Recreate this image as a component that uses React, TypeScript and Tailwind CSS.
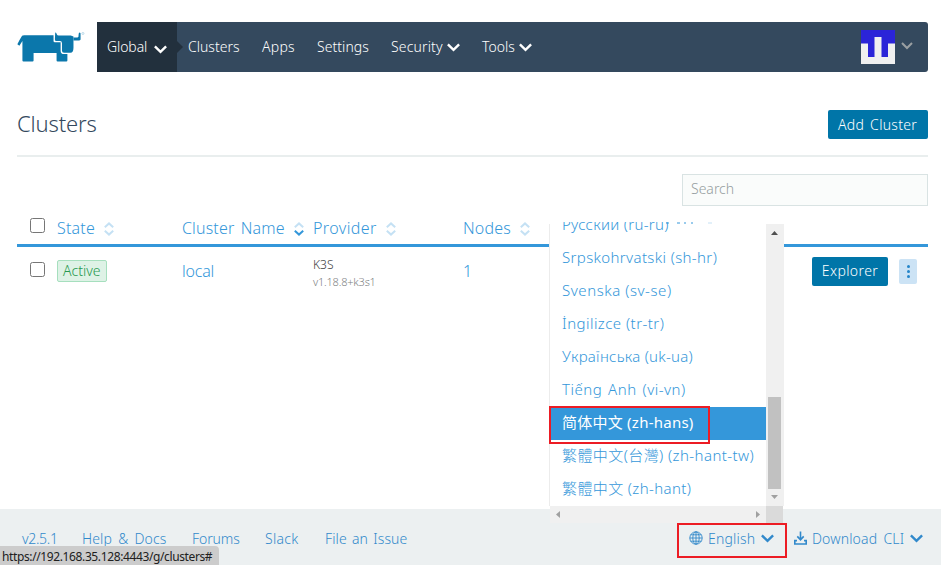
import type { ReactNode } from "react";

function Chevron({ className }: { className?: string }) {
  return (
    <svg viewBox="0 0 13 9" className={`h-[9px] w-[13px] shrink-0 ${className ?? ""}`} fill="none" stroke="currentColor" strokeWidth="2.4">
      <path d="M0.9 1.4 L6.5 6.9 L12.1 1.4" />
    </svg>
  );
}

function Sort({ active }: { active?: boolean }) {
  return (
    <svg viewBox="0 0 10 14" className="h-[14px] w-[10px] shrink-0" fill="none" strokeWidth="2">
      <path d="M0.8 5.2 L5 1.4 L9.2 5.2" stroke="#c5e1f4" />
      <path d="M0.8 8.8 L5 12.6 L9.2 8.8" stroke={active ? "#3497da" : "#c5e1f4"} />
    </svg>
  );
}

function Logo() {
  return (
    <svg viewBox="20 25 210 100" className="h-[34px] w-[71px]" fill="#0b77ab">
      <path d="M24 67 Q31 53 38 42 Q40 40 44 40 H131 V57 Q131 61 135 61 H152 V86 Q152 96 162 96 H172 V115 Q172 118 169 118 H143 Q140 118 140 115 V93 H72 V115 Q72 118 69 118 H42 Q39 118 39 115 V57 L30 71 Z" />
      <path d="M136 32 Q139 31 141 38 Q142 41 146 41 H182 Q186 42 190 44 V77 Q190 91 181 92 H162 Q156 92 156 86 V64 Q156 57 150 57 H138 Q135 57 135 52 Z" />
      <path d="M192 47 H202 Q206 46 205 40 Q205 32 208 32 Q212 31 211 40 V53 Q210 56 206 56 H190 V47Z" />
      <circle cx="218" cy="35" r="3" fill="none" stroke="#78b5d2" strokeWidth="1.4" />
    </svg>
  );
}

function Checkbox() {
  return <input type="checkbox" className="block size-[15px] appearance-none rounded-[2.5px] border border-[#767676] bg-white" />;
}

function Globe() {
  return (
    <svg viewBox="0 0 14 14" className="h-[14px] w-[14px]" fill="none" stroke="currentColor" strokeWidth="0.9">
      <circle cx="7" cy="7" r="6.2" />
      <ellipse cx="7" cy="7" rx="3.2" ry="6.2" />
      <path d="M7 0.8 V13.2 M0.8 7 H13.2 M1.6 3.8 H12.4 M1.6 10.2 H12.4" />
    </svg>
  );
}

function Download() {
  return (
    <svg viewBox="0 0 13 14" className="h-[14px] w-[13px]" fill="none" stroke="currentColor" strokeWidth="1.6">
      <path d="M6.5 0.5 V8.6 M3.3 5.4 L6.5 8.8 L9.7 5.4" />
      <path d="M3 9.6 H0.8 V13 H12.2 V9.6 H10" />
    </svg>
  );
}

function Head({ children, gap, active }: { children: ReactNode; gap: string; active?: boolean }) {
  return (
    <div className={`flex items-center ${gap}`}>
      {children}
      <div className="pt-[2px]"><Sort active={active} /></div>
    </div>
  );
}

const languages = [
  { name: "Русский (ru-ru)", track: "tracking-[0.3px]" },
  { name: "Srpskohrvatski (sh-hr)", track: "tracking-[0.36px]" },
  { name: "Svenska (sv-se)", track: "tracking-[0.55px]" },
  { name: "İngilizce (tr-tr)", track: "tracking-[0.46px]" },
  { name: "Українська (uk-ua)", track: "tracking-[0.27px]" },
  { name: "Tiếng Anh (vi-vn)", track: "tracking-[0.5px] [word-spacing:1.5px]" },
  { name: "简体中文 (zh-hans)", track: "tracking-[0.24px]", selected: true },
  { name: "繁體中文(台灣) (zh-hant-tw)", track: "tracking-[0.42px]" },
  { name: "繁體中文 (zh-hant)", track: "tracking-[0.38px]" },
];

function LanguageMenu() {
  return (
    <div className="absolute left-[549px] top-[222px] h-[301px] w-[235px]">
      <div className="flex h-[284px]">
        <div className="relative w-[217px] overflow-hidden bg-white">
          <ul className="-mt-[13px] text-[15px] leading-[30px] text-[#3497da]">
            {languages.map((l) => (
              <li key={l.name} className={`h-[33px] whitespace-nowrap pl-[13px] ${l.track} ${l.selected ? "bg-[#3497da] font-normal text-white" : ""}`}>
                {l.name}
              </li>
            ))}
          </ul>
          <div className="absolute bottom-0 left-0 top-[2px] w-px bg-[#ececec]" />
          <svg viewBox="0 0 50 2" className="absolute left-[115px] top-0 h-[2px] w-[50px]">
            <path d="M2 1 H5 M13 1 H16 M20 1 H22 M27 1 H29" stroke="#3497da" strokeWidth="1" />
            <path d="M44 1 H48" stroke="#c5e1f4" strokeWidth="1" />
          </svg>
        </div>
        <div className="mt-[2px] flex w-[18px] flex-col bg-[#f0f0f0] pb-[6px] pl-[2px] pt-[7px]">
          <svg viewBox="0 0 7 4" className="ml-[3px] h-1 w-[7px]"><path d="M0 4 L3.5 0 L7 4Z" fill="#505050" /></svg>
          <div className="mt-[162px] h-[92px] w-[13px] bg-[#c1c1c1]" />
          <svg viewBox="0 0 7 4" className="ml-[3px] mt-[6px] h-1 w-[7px]"><path d="M0 0 L3.5 4 L7 0Z" fill="#a0a0a0" /></svg>
        </div>
      </div>
      <div className="flex h-[17px] pl-px">
        <div className="flex w-[216px] items-center justify-between bg-[#f0f0f0] pl-[6px] pr-[6px]">
          <svg viewBox="0 0 4 7" className="h-[7px] w-1"><path d="M4 0 L0 3.5 L4 7Z" fill="#a0a0a0" /></svg>
          <svg viewBox="0 0 4 7" className="h-[7px] w-1"><path d="M0 0 L4 3.5 L0 7Z" fill="#a0a0a0" /></svg>
        </div>
        <div className="w-[17px] bg-[#dadada]" />
      </div>
      <div className="absolute left-0 top-[184px] h-[38px] w-[161px] border-2 border-[#ec1c24]" />
    </div>
  );
}

export default function App() {
  return (
    <div className="relative flex h-[565px] w-[941px] flex-col overflow-hidden whitespace-nowrap bg-white font-['Noto_Sans','Noto_Sans_CJK_SC',sans-serif] text-[14px] font-light">
      <header className="flex pl-[17px] pr-[13px] pt-[22px]">
        <div className="-ml-px w-[81px] pt-2"><Logo /></div>
        <nav className="flex h-[50px] flex-1 items-center rounded-r-[3px] bg-[#34495e] pb-[2px] text-white">
          <div className="relative -mb-[2px] flex h-[50px] w-20 items-center bg-[#22303d] pb-[2px] pl-[10px] tracking-[-0.1px]">
            Global
            <Chevron className="ml-[7px] mt-[6px]" />
            <svg viewBox="0 0 6 12" className="absolute left-20 top-[19px] h-3 w-[6px]"><path d="M0 0 L6 6 L0 12Z" fill="#22303d" /></svg>
          </div>
          <div className="ml-[11px] w-[74px]">Clusters</div>
          <div className="w-[55px] tracking-[0.25px]">Apps</div>
          <div className="w-[74px] tracking-[0.05px]">Settings</div>
          <div className="flex w-[91px] items-center tracking-[0.15px]"><span className="w-[56px]">Security</span><Chevron className="mt-[3px]" /></div>
          <div className="flex flex-1 items-center"><span className="w-[37px]">Tools</span><Chevron className="mt-[3px]" /></div>
          <svg viewBox="0 0 34 34" className="mt-[2px] h-[34px] w-[34px]">
            <rect width="34" height="34" fill="#f0f0f0" />
            <path d="M0 0 H34 V13.5 H27 V27 H20.5 V7 H13.5 V27 H7 V13.5 H0Z" fill="#2b24d8" />
          </svg>
          <svg viewBox="0 0 12 8" className="ml-[6px] mr-[15px] h-2 w-3" fill="none" stroke="#9a9fa2" strokeWidth="2"><path d="M1 1 L6 6 L11 1" /></svg>
        </nav>
      </header>

      <main className="flex-1 px-[17px] pr-[13px]">
        <div className="flex h-[85px] items-center justify-between border-b-2 border-[#e9eeee] pt-[22px]">
          <h1 className="-mt-[4px] text-[22px] leading-[30px] tracking-[-0.15px] text-[#34495e]">Clusters</h1>
          <button className="h-[29px] w-[100px] rounded-[2px] bg-[#0075a8] pb-px pl-[10px] text-left tracking-[0.3px] text-white [word-spacing:2px]">Add Cluster</button>
        </div>
        <div className="flex justify-end pt-[17px]">
          <div className="h-8 w-[246px] border border-[#d9e3e3] bg-[#fafcfb] pl-2 leading-[28px] text-[#969ea0]">Search</div>
        </div>
        <div className="grid h-[41px] grid-cols-[40px_125px_131px_150px_1fr] items-center border-b-3 border-[#3497da] pt-[5px] text-[16px] text-[#3497da]">
          <div className="-mt-[5px] pl-[12.5px]"><Checkbox /></div>
          <Head gap="gap-[9px] tracking-[0.2px]">State</Head>
          <Head gap="gap-[9px] tracking-[0.15px] [word-spacing:2px]" active>Cluster Name</Head>
          <Head gap="gap-[9px] tracking-[0.4px]">Provider</Head>
          <Head gap="gap-[9px] tracking-[0.2px]">Nodes</Head>
        </div>
        <div className="grid h-[48px] grid-cols-[40px_125px_131px_150px_1fr] items-center text-[#3497da]">
          <div className="-mt-[3px] pl-[12.5px]"><Checkbox /></div>
          <div><span className="block h-[22px] w-[50px] rounded-[2px] border border-[#a6dfbe] bg-[#def2e6] pl-[5px] leading-[19px] text-[#27994f]">Active</span></div>
          <div className="-mt-px text-[16px] tracking-[-0.2px]">local</div>
          <div className="pt-[3px] text-[12px] leading-[17px]">
            <div className="text-[#3d3d3d]">K3S</div>
            <div className="text-[11px] tracking-[-0.2px] text-[#7d8282]">v1.18.8+k3s1</div>
          </div>
          <div className="flex items-center justify-between pr-[11px]">
            <span className="-mt-px text-[16px]">1</span>
            <div className="flex items-center gap-[11px]">
              <button className="h-[29px] w-[76px] rounded-[2px] bg-[#0075a8] pb-px tracking-[0.4px] text-white">Explorer</button>
              <button className="flex h-[25px] w-[18px] flex-col items-center justify-center gap-[2px] rounded-[2px] bg-[#cce3f5]">
                <i className="size-[3px] rounded-full bg-[#2586ca]" /><i className="size-[3px] rounded-full bg-[#2586ca]" /><i className="size-[3px] rounded-full bg-[#2586ca]" />
              </button>
            </div>
          </div>
        </div>
      </main>

      <footer className="flex h-14 items-center bg-[#ecf0f1] pl-[22px] pt-[2px] text-[#3189cb]">
        <span className="w-[60px] tracking-[-0.3px]">v2.5.1</span>
        <span className="w-[110px] tracking-[0.1px] [word-spacing:2.5px]">Help &amp; Docs</span>
        <span className="w-[73px] tracking-[-0.1px]">Forums</span>
        <span className="w-[60px] tracking-[0.3px]">Slack</span>
        <span className="w-[364px] tracking-[0.1px] [word-spacing:1.5px]">File an Issue</span>
        <Globe />
        <span className="ml-[5px] w-[53px] tracking-[0.2px]">English</span>
        <Chevron />
        <span className="ml-[20px] -mt-px"><Download /></span>
        <span className="ml-[5px] w-[98px] tracking-[0.15px] [word-spacing:2.5px]">Download CLI</span>
        <Chevron />
      </footer>

      <LanguageMenu />
      <div className="absolute left-[677px] top-[523px] h-[35px] w-[110px] border-2 border-[#ec1c24]" />
      <div className="absolute bottom-0 left-0 h-[19px] w-[219px] rounded-tr-[4px] bg-[#cccccc] pl-[2px] text-[12px] font-normal leading-[22px] tracking-[-0.38px] text-[#202020]">
        https://192.168.35.128:4443/g/clusters#
      </div>
    </div>
  );
}
